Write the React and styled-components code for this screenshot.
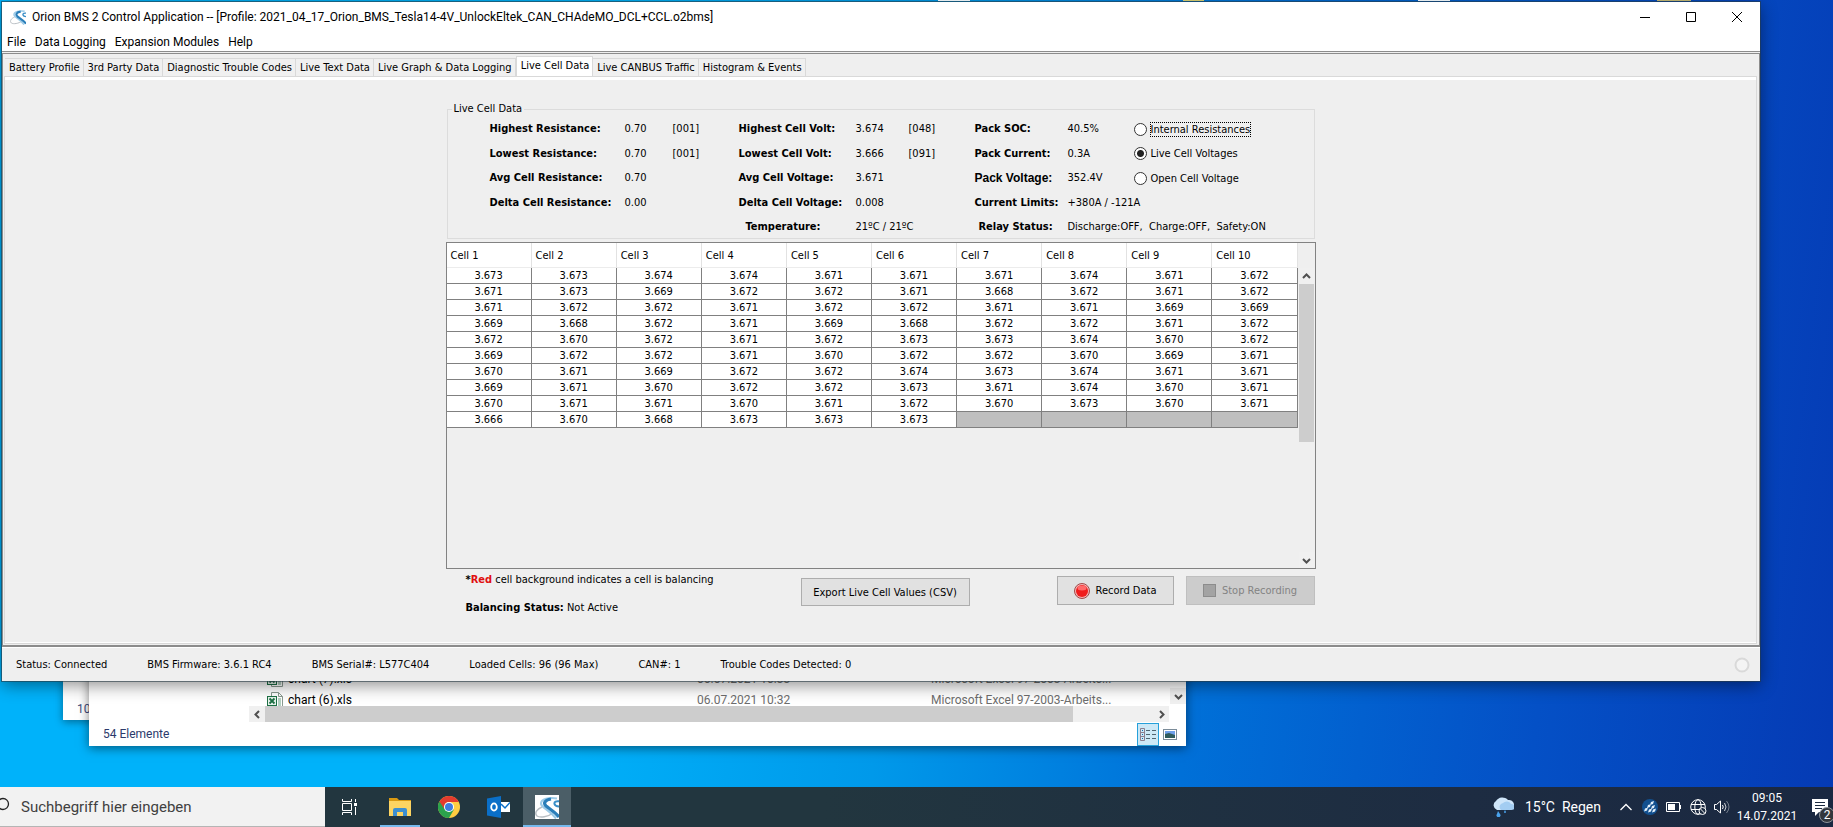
import { useState } from "react";
import styled, { createGlobalStyle } from "styled-components";

const tabs = [
  "Battery Profile",
  "3rd Party Data",
  "Diagnostic Trouble Codes",
  "Live Text Data",
  "Live Graph & Data Logging",
  "Live Cell Data",
  "Live CANBUS Traffic",
  "Histogram & Events",
];

const cells = [
  ["3.673", "3.673", "3.674", "3.674", "3.671", "3.671", "3.671", "3.674", "3.671", "3.672"],
  ["3.671", "3.673", "3.669", "3.672", "3.672", "3.671", "3.668", "3.672", "3.671", "3.672"],
  ["3.671", "3.672", "3.672", "3.671", "3.672", "3.672", "3.671", "3.671", "3.669", "3.669"],
  ["3.669", "3.668", "3.672", "3.671", "3.669", "3.668", "3.672", "3.672", "3.671", "3.672"],
  ["3.672", "3.670", "3.672", "3.671", "3.672", "3.673", "3.673", "3.674", "3.670", "3.672"],
  ["3.669", "3.672", "3.672", "3.671", "3.670", "3.672", "3.672", "3.670", "3.669", "3.671"],
  ["3.670", "3.671", "3.669", "3.672", "3.672", "3.674", "3.673", "3.674", "3.671", "3.671"],
  ["3.669", "3.671", "3.670", "3.672", "3.672", "3.673", "3.671", "3.674", "3.670", "3.671"],
  ["3.670", "3.671", "3.671", "3.670", "3.671", "3.672", "3.670", "3.673", "3.670", "3.671"],
  ["3.666", "3.670", "3.668", "3.673", "3.673", "3.673", "", "", "", ""],
];

const statusItems = [
  "Status: Connected",
  "BMS Firmware: 3.6.1 RC4",
  "BMS Serial#: L577C404",
  "Loaded Cells: 96 (96 Max)",
  "CAN#: 1",
  "Trouble Codes Detected: 0",
];

const viewModes = ["Internal Resistances", "Live Cell Voltages", "Open Cell Voltage"];

function OrionLogo({ size }) {
  return (
    <svg width={size} height={size} viewBox="0 0 24 24" fill="none" aria-hidden="true">
      <rect width="24" height="24" fill="#fff" />
      <path d="M7 12C2 14-1 18 2 21c3 2 11 1 16-3" stroke="#b9bfc4" strokeWidth="1.500" />
      <path d="M22 3.500C14 2 6 4 6 8.500c0 4 8 6 15 15" stroke="#9ccbe8" strokeWidth="2.200" />
      <path d="M16 4C10 5 8 8 11 11c3 2.500 8 5 13 11" stroke="#2a7fba" strokeWidth="3.200" />
      <path d="M25 6.500c-4-1-6 .5-5.500 2.500s3 2.500 5.500 2.500" stroke="#3a8fc8" strokeWidth="2" />
    </svg>
  );
}

function Chevron({ dir }) {
  const turn = { up: 0, right: 90, down: 180, left: 270 }[dir];
  return (
    <svg width="9" height="9" viewBox="0 0 9 9" fill="none" aria-hidden="true">
      <path d="M1 6l3.500-3.500L8 6" stroke="#505050" strokeWidth="2" transform={`rotate(${turn} 4.5 4.5)`} />
    </svg>
  );
}

function ExcelIcon() {
  return (
    <svg width="16" height="16" viewBox="0 0 16 16" fill="none" aria-hidden="true">
      <path d="M4.500 .5h7l4 4v11h-11z" fill="#fff" stroke="#8a9a90" />
      <path d="M11.500 .5v4h4" stroke="#8a9a90" />
      <path d="M11 7h3M11 9h3M11 11h3M11 13h3" stroke="#6aa585" />
      <rect x=".5" y="4.500" width="9" height="9" fill="#e8f3ec" stroke="#1d7044" />
      <path d="M2.500 6.500l5 5M7.500 6.500l-5 5" stroke="#1d7044" strokeWidth="1.800" />
    </svg>
  );
}

function TitleBar() {
  return (
    <TitleRow>
      <OrionLogo size={16} />
      <TitleText>
        Orion BMS 2 Control Application -- [Profile: 2021_04_17_Orion_BMS_Tesla14-4V_UnlockEltek_CAN_CHAdeMO_DCL+CCL.o2bms]
      </TitleText>
      <CaptionButton aria-label="Minimize">
        <svg width="10" height="10" viewBox="0 0 10 10"><path d="M0 5.500h10" stroke="#000" /></svg>
      </CaptionButton>
      <CaptionButton aria-label="Maximize">
        <svg width="10" height="10" viewBox="0 0 10 10"><path d="M.5 .5h9v9h-9z" fill="none" stroke="#000" /></svg>
      </CaptionButton>
      <CaptionButton aria-label="Close">
        <svg width="10" height="10" viewBox="0 0 10 10"><path d="M0 0l10 10M10 0L0 10" stroke="#000" /></svg>
      </CaptionButton>
    </TitleRow>
  );
}

function Readings({ mode, setMode }) {
  const radio = (name) => (
    <RadioLabel>
      <input type="radio" name="view" checked={mode === name} onChange={() => setMode(name)} />
      <RadioText $focused={name === viewModes[0]}>{name}</RadioText>
    </RadioLabel>
  );

  return (
    <Group>
      <legend>Live Cell Data</legend>
      <ReadingGrid>
        <b>Highest Resistance:</b>
        <span>0.70</span>
        <span>[001]</span>
        <b>Highest Cell Volt:</b>
        <span>3.674</span>
        <span>[048]</span>
        <b>Pack SOC:</b>
        <span>40.5%</span>
        {radio(viewModes[0])}

        <b>Lowest Resistance:</b>
        <span>0.70</span>
        <span>[001]</span>
        <b>Lowest Cell Volt:</b>
        <span>3.666</span>
        <span>[091]</span>
        <b>Pack Current:</b>
        <span>0.3A</span>
        {radio(viewModes[1])}

        <b>Avg Cell Resistance:</b>
        <Value $span={2}>0.70</Value>
        <b>Avg Cell Voltage:</b>
        <Value $span={2}>3.671</Value>
        <ArialLabel>Pack Voltage:</ArialLabel>
        <span>352.4V</span>
        {radio(viewModes[2])}

        <b>Delta Cell Resistance:</b>
        <Value $span={2}>0.00</Value>
        <b>Delta Cell Voltage:</b>
        <Value $span={2}>0.008</Value>
        <b>Current Limits:</b>
        <Value $span={2}>+380A / -121A</Value>

        <LastLabel $start={4} $indent="7px">Temperature:</LastLabel>
        <Value $span={2}>21ºC / 21ºC</Value>
        <LastLabel $start={7} $indent="4px">Relay Status:</LastLabel>
        <Value $span={2}>Discharge:OFF,&nbsp; Charge:OFF,&nbsp; Safety:ON</Value>
      </ReadingGrid>
    </Group>
  );
}

function CellTable() {
  return (
    <TableFrame>
      <TableArea>
        <Table>
          <thead>
            <tr>
              {cells[0].map((_, i) => (
                <th key={i} scope="col">Cell {i + 1}</th>
              ))}
            </tr>
          </thead>
          <tbody>
            {cells.map((row, r) => (
              <tr key={r}>
                {row.map((volt, c) => (
                  <Cell key={c} $empty={!volt}>{volt}</Cell>
                ))}
              </tr>
            ))}
          </tbody>
        </Table>
      </TableArea>
      <ScrollColumn>
        <ScrollButton aria-label="Scroll up"><Chevron dir="up" /></ScrollButton>
        <ScrollTrack><ScrollThumb /></ScrollTrack>
        <ScrollButton aria-label="Scroll down"><Chevron dir="down" /></ScrollButton>
      </ScrollColumn>
    </TableFrame>
  );
}

function OrionWindow() {
  const [tab, setTab] = useState("Live Cell Data");
  const [mode, setMode] = useState("Live Cell Voltages");

  return (
    <MainWindow>
      <TitleBar />
      <MenuBar>
        <button>File</button>
        <button>Data Logging</button>
        <button>Expansion Modules</button>
        <button>Help</button>
      </MenuBar>
      <Body>
        <TabBar role="tablist">
          {tabs.map((name) => (
            <Tab key={name} role="tab" aria-selected={tab === name} $active={tab === name} onClick={() => setTab(name)}>
              {name}
            </Tab>
          ))}
        </TabBar>
        <Panel>
          <Content>
            <Readings mode={mode} setMode={setMode} />
            <CellTable />
            <Actions>
              <Notes>
                <p><b>*<em>Red</em></b> cell background indicates a cell is balancing</p>
                <p><b>Balancing Status:</b> Not Active</p>
              </Notes>
              <ExportButton>Export Live Cell Values (CSV)</ExportButton>
              <RecordButton>
                <svg width="16" height="16" viewBox="0 0 16 16" aria-hidden="true">
                  <circle cx="8" cy="8" r="7.500" fill="#f5b5b5" stroke="#a04848" />
                  <circle cx="8" cy="8" r="6" fill="#f01c1c" />
                  <ellipse cx="8" cy="5" rx="4.500" ry="2.500" fill="#ff6a6a" />
                </svg>
                Record Data
              </RecordButton>
              <StopButton disabled>
                <svg width="13" height="13" viewBox="0 0 13 13" aria-hidden="true">
                  <rect x=".5" y=".5" width="12" height="12" fill="#a3a3a3" stroke="#8c8c8c" />
                </svg>
                Stop Recording
              </StopButton>
            </Actions>
          </Content>
        </Panel>
      </Body>
      <StatusBar>
        {statusItems.map((item) => (
          <span key={item}>{item}</span>
        ))}
        <svg width="16" height="16" viewBox="0 0 16 16" aria-hidden="true">
          <circle cx="8" cy="8" r="6.500" fill="#f4f4f4" stroke="#d9d9d9" strokeWidth="2" />
        </svg>
      </StatusBar>
    </MainWindow>
  );
}

function ExplorerWindow() {
  return (
    <Explorer>
      <Files>
        <FileRow>
          <ExcelIcon />
          <span>chart (7).xls</span>
          <small>06.07.2021 10:33</small>
          <small>Microsoft Excel 97-2003-Arbeits...</small>
        </FileRow>
        <FileRow>
          <ExcelIcon />
          <span>chart (6).xls</span>
          <small>06.07.2021 10:32</small>
          <small>Microsoft Excel 97-2003-Arbeits...</small>
        </FileRow>
        <FileScrollDown aria-label="Scroll files down"><Chevron dir="down" /></FileScrollDown>
      </Files>
      <HorizontalScroll>
        <ScrollButton aria-label="Scroll left"><Chevron dir="left" /></ScrollButton>
        <HorizontalTrack><HorizontalThumb /></HorizontalTrack>
        <ScrollButton aria-label="Scroll right"><Chevron dir="right" /></ScrollButton>
      </HorizontalScroll>
      <ExplorerStatus>
        <span>54 Elemente</span>
        <ViewButton $active aria-label="Details">
          <svg width="16" height="13" viewBox="0 0 16 13" fill="none">
            <path d="M.5 .5h4v12h-4zM.5 4.500h4M.5 8.500h4" stroke="#8b7f8f" />
            <path d="M6 2.500h4M12 2.500h4M6 6.500h4M12 6.500h4M6 10.500h4M12 10.500h4" stroke="#4f6470" />
            <path d="M2 2.500h1M2 6.500h1M2 10.500h1" stroke="#1c66a8" />
          </svg>
        </ViewButton>
        <ViewButton aria-label="Large icons">
          <svg width="14" height="11" viewBox="0 0 14 11">
            <rect x=".5" y=".5" width="13" height="10" fill="#fff" stroke="#7b8c99" />
            <rect x="2" y="2" width="10" height="4" fill="#6fa0ea" />
            <path d="M2 5l4-1 6 2v3H2z" fill="#2f5b5c" />
          </svg>
        </ViewButton>
      </ExplorerStatus>
    </Explorer>
  );
}

function Taskbar() {
  return (
    <Bar>
      <Search>
        <svg width="10" height="14" viewBox="0 0 10 14" fill="none" aria-hidden="true">
          <circle cx="3" cy="7" r="5.500" stroke="#222" strokeWidth="1.300" />
        </svg>
        <input type="text" aria-label="Suche" placeholder="Suchbegriff hier eingeben" />
      </Search>
      <TaskButton aria-label="Taskansicht">
        <svg width="17" height="16" viewBox="0 0 17 16" fill="none" stroke="#fff">
          <path d="M1.500 4.500h9v7h-9zM1.500 0v2.500h9V0M1.500 16v-2.500h9V16M14.500 0v3M14.500 8v8" />
          <path d="M13 5.500h3" strokeWidth="3" />
        </svg>
      </TaskButton>
      <Apps>
        <TaskButton aria-label="Explorer">
          <svg width="22" height="18" viewBox="0 0 22 18">
            <path d="M0 0h8l2 2h12v4H0z" fill="#d99a12" />
            <path d="M0 3h22v15H0z" fill="#fcd462" />
            <path d="M4 18v-6q0-2 2-2h10q2 0 2 2v6h-4v-4H8v4z" fill="#3c8fd0" />
          </svg>
          <Running $inset="4px" />
        </TaskButton>
        <TaskButton aria-label="Chrome">
          <svg width="22" height="22" viewBox="0 0 22 22">
            <circle cx="11" cy="11" r="11" fill="#ffcd41" />
            <path d="M11 11L1.470 5.500A11 11 0 0 0 11 22l4.800-8.200z" fill="#2ba24c" />
            <path d="M11 6h9.800A11 11 0 0 0 1.470 5.500L6.700 13.500A5 5 0 0 1 11 6z" fill="#e33b2e" />
            <circle cx="11" cy="11" r="5" fill="#fff" />
            <circle cx="11" cy="11" r="4" fill="#3f7de0" />
          </svg>
        </TaskButton>
        <TaskButton aria-label="Outlook">
          <svg width="23" height="22" viewBox="0 0 23 22">
            <path d="M0 2.500L14 0v22L0 19.500z" fill="#0a6fc8" />
            <rect x="14" y="6" width="9" height="10" fill="#fff" />
            <path d="M14 8l4 4 5-5.500" fill="none" stroke="#0a6fc8" strokeWidth="1.500" />
            <ellipse cx="7" cy="11" rx="2.800" ry="3.600" fill="none" stroke="#fff" strokeWidth="1.800" />
          </svg>
        </TaskButton>
        <TaskButton $active aria-label="Orion BMS 2">
          <OrionLogo size={24} />
          <Running $inset="0" />
        </TaskButton>
      </Apps>
      <Tray>
        <Weather>
          <svg width="22" height="20" viewBox="0 0 22 20" aria-hidden="true">
            <path d="M5 13a5 5 0 0 1-1-9 7 6 0 0 1 12-1 5 5 0 0 1 2 10z" fill="#cfe6fa" />
            <path d="M9 13a4 4 0 0 1 2-7 5 5 0 0 1 8 1 4 3 0 0 1 0 6z" fill="#a3cdf2" />
            <path d="M6 14l2 3a2 2 0 1 1-3 0zM13 13l1 2a1 1 0 1 1-2 0z" fill="#4aa3ee" />
          </svg>
          15°C&nbsp; Regen
        </Weather>
        <TrayButton aria-label="Ausgeblendete Symbole">
          <svg width="12" height="8" viewBox="0 0 12 8" fill="none"><path d="M.5 7L6 1.500 11.500 7" stroke="#fff" strokeWidth="1.300" /></svg>
        </TrayButton>
        <TrayButton aria-label="Synchronisierung">
          <svg width="16" height="16" viewBox="0 0 16 16">
            <circle cx="8" cy="8" r="8" fill="#12508f" />
            <path d="M9 3l3-1-1 3-3 1zM6 6l3-1-1 3-3 1zM10 7l3-1-1 3-3 1zM3 9.500l3-1-1 3-3 1zM7 10.500l3-1-1 3-3 1zM11 10.500l3-1-1 3-3 1z" fill="#e3f0fb" />
          </svg>
        </TrayButton>
        <TrayButton aria-label="Akku">
          <svg width="16" height="10" viewBox="0 0 16 10" fill="none">
            <path d="M.5 .5h13v9H.5z" stroke="#fff" />
            <path d="M2 2h7v6H2zM14 3h1v4h-1z" fill="#fff" />
          </svg>
        </TrayButton>
        <TrayButton aria-label="Netzwerk">
          <svg width="17" height="16" viewBox="0 0 17 16" fill="none" stroke="#fff">
            <circle cx="8" cy="8" r="7.300" />
            <ellipse cx="8" cy="8" rx="3.200" ry="7.300" />
            <path d="M1 5.500h14M1 10.500h14" />
            <circle cx="12.500" cy="12" r="3.500" fill="#1b2a40" />
            <path d="M10 9.500l5 5" />
          </svg>
        </TrayButton>
        <TrayButton aria-label="Lautsprecher">
          <svg width="16" height="14" viewBox="0 0 16 14" fill="none" stroke="#fff">
            <path d="M.5 4.500h2l4-3.500v12l-4-3.500h-2z" />
            <path d="M8.500 5q1.500 2 0 4" />
            <path d="M10.500 3q3 4 0 8" opacity=".8" />
            <path d="M12.500 1q5 6 0 12" opacity=".4" />
          </svg>
        </TrayButton>
        <Clock>
          <time>09:05</time>
          <time>14.07.2021</time>
        </Clock>
        <NoticeButton aria-label="Benachrichtigungen">
          <svg width="16" height="17" viewBox="0 0 16 17">
            <path d="M0 0h16v13H7l-4 4v-4H0z" fill="#fff" />
            <path d="M3 3.500h10M3 6.500h10M3 9.500h7" stroke="#1b2a40" />
          </svg>
          <Badge>2</Badge>
        </NoticeButton>
      </Tray>
    </Bar>
  );
}

function App() {
  return (
    <>
      <GlobalStyle />
      <Screen>
        <Desktop>
          <DesktopIcon $x="938px" $width="32px" $color="#e4ebee" />
          <DesktopIcon $x="1183px" $width="21px" $color="#c9c06a" />
          <DesktopIcon $x="1418px" $width="32px" $color="#e4ebee" />
          <DesktopIcon $x="1657px" $width="34px" $color="#b5ab6c" />
          <BackWindow>10</BackWindow>
          <ExplorerWindow />
          <OrionWindow />
        </Desktop>
        <Taskbar />
      </Screen>
    </>
  );
}

export default App;

const GlobalStyle = createGlobalStyle`
  * {
    box-sizing: border-box;
  }
  body {
    margin: 0;
    overflow: hidden;
    font-family: "DejaVu Sans Condensed", "DejaVu Sans", sans-serif;
    font-size: 11px;
    color: #000;
  }
  button, input {
    font: inherit;
    color: inherit;
    border: none;
    background: none;
    padding: 0;
    margin: 0;
  }
  svg {
    display: block;
    flex: none;
  }
`;

const systemFont = `Roboto, "Open Sans", sans-serif`;

const Screen = styled.div`
  display: flex;
  flex-direction: column;
  height: 100vh;
  background: linear-gradient(97deg, #00b2fa 0%, #00b2fa 33%, #0099ea 50%, #0070d8 66%, #0450c6 84%, #053ab4 100%);
`;

const Desktop = styled.div`
  position: relative;
  flex: 1;
  overflow: hidden;
`;

const DesktopIcon = styled.div`
  position: absolute;
  top: 0;
  left: ${(p) => p.$x};
  width: ${(p) => p.$width};
  height: 1px;
  background: ${(p) => p.$color};
  z-index: 1;
`;

/* windows float freely on the desktop */
const MainWindow = styled.main`
  position: absolute;
  inset: 2px 73px 106px 2px;
  display: flex;
  flex-direction: column;
  background: #efefef;
  box-shadow: 0 0 0 1px rgba(40, 60, 70, 0.6), 0 4px 16px rgba(0, 0, 0, 0.45);
`;

const BackWindow = styled.div`
  position: absolute;
  left: 63px;
  bottom: 67px;
  width: 400px;
  height: 300px;
  display: flex;
  align-items: flex-end;
  padding: 0 14px 3px;
  background: #fff;
  box-shadow: 0 2px 8px rgba(0, 0, 0, 0.4);
  font: 12px/16px ${systemFont};
  color: #3d4c7c;
`;

const Explorer = styled.section`
  position: absolute;
  left: 89px;
  right: 647px;
  bottom: 41px;
  display: flex;
  flex-direction: column;
  background: #fff;
  box-shadow: 0 2px 10px rgba(0, 0, 0, 0.5);
  font: 12px/16px ${systemFont};
`;

const TitleRow = styled.header`
  display: flex;
  align-items: center;
  height: 29px;
  padding-left: 8px;
  background: #fff;
`;

const TitleText = styled.h1`
  flex: 1;
  margin: 0 0 0 6px;
  font: 12px/16px ${systemFont};
  white-space: nowrap;
`;

const CaptionButton = styled.button`
  display: flex;
  justify-content: center;
  align-items: center;
  width: 46px;
  height: 29px;
`;

const MenuBar = styled.nav`
  display: flex;
  gap: 9px;
  height: 21px;
  padding: 2px 5px 0;
  background: #fff;
  border-bottom: 1px solid #8c8c8c;
  font: 12px/18px ${systemFont};
`;

const Body = styled.div`
  flex: 1;
  display: flex;
  flex-direction: column;
  margin-top: 1px;
  padding: 2px 2px 1px 1px;
  border: 1px solid #8c8c8c;
  border-bottom-width: 2px;
`;

const TabBar = styled.div`
  display: flex;
  align-items: flex-end;
  height: 20px;
  padding-left: 1px;
`;

const Tab = styled.button`
  height: ${(p) => (p.$active ? "20px" : "18px")};
  padding: ${(p) => (p.$active ? "0 3px 3px 4px" : "0 3px 0 4px")};
  background: ${(p) => (p.$active ? "#fff" : "#f0f0f0")};
  border: 1px solid #d9d9d9;
  border-left-width: ${(p) => (p.$active ? "1px" : "0")};
  border-bottom: none;
  white-space: nowrap;
`;

const Panel = styled.div`
  flex: 1;
  border: 1px solid #d9d9d9;
  box-shadow: inset 0 3px #fff, inset 0 -1px #fff;
  padding-top: 25px;
`;

const Content = styled.div`
  width: 870px;
  margin: 0 auto;
`;

const Group = styled.fieldset`
  height: 137px;
  margin: 0 1px 3px;
  padding: 5px 0 0 42px;
  border: 1px solid #dcdcdc;

  legend {
    margin-left: -38px;
    padding: 0 2px;
    line-height: 14px;
  }
`;

const ReadingGrid = styled.div`
  display: grid;
  grid-template-columns: 135px 48px 66px 117px 53px 66px 93px 66px 1fr;
  align-content: space-between;
  height: 114px;
  line-height: 16px;
  white-space: nowrap;
`;

const Value = styled.span`
  grid-column: span ${(p) => p.$span};
`;

const ArialLabel = styled.b`
  font-family: "Liberation Sans", Arial, sans-serif;
  font-size: 12px;
`;

const LastLabel = styled.b`
  grid-column-start: ${(p) => p.$start};
  padding-left: ${(p) => p.$indent};
`;

const RadioLabel = styled.label`
  display: flex;
  align-items: center;
  gap: 4px;

  input {
    appearance: none;
    width: 13px;
    height: 13px;
    border: 1px solid #333;
    border-radius: 50%;
    background: #fff;
  }
  input:checked {
    background: radial-gradient(circle, #222 0 3px, #fff 4px);
  }
`;

const RadioText = styled.span`
  line-height: 13px;
  outline: ${(p) => (p.$focused ? "1px dotted #000" : "none")};
`;

const TableFrame = styled.div`
  display: flex;
  height: 327px;
  border: 1px solid #828282;
`;

const TableArea = styled.div`
  flex: 1;
`;

const Table = styled.table`
  width: 100%;
  table-layout: fixed;
  border-collapse: separate;
  border-spacing: 0;

  th {
    height: 25px;
    padding: 0 4px;
    background: #fff;
    border-right: 1px solid #e2e2e2;
    border-bottom: 1px solid #ececec;
    font-weight: normal;
    text-align: left;
  }
`;

const Cell = styled.td`
  height: 16px;
  padding: 0;
  line-height: 15px;
  text-align: center;
  background: ${(p) => (p.$empty ? "#bfbfbf" : "#fff")};
  border-right: 1px solid #808080;
  border-bottom: 1px solid #808080;
`;

const ScrollColumn = styled.div`
  display: flex;
  flex-direction: column;
  width: 17px;
  padding: 25px 1px 0;
`;

const ScrollButton = styled.button`
  display: flex;
  justify-content: center;
  align-items: center;
  width: 16px;
  height: 16px;
  background: #f0f0f0;
`;

const ScrollTrack = styled.div`
  flex: 1;
`;

const ScrollThumb = styled.div`
  height: 59%;
  background: #cdcdcd;
`;

const Actions = styled.div`
  display: flex;
  align-items: flex-start;
  padding: 3px 1px 0 20px;
`;

const Notes = styled.div`
  flex: 1;
  line-height: 16px;

  p {
    margin: 0 0 12px;
  }
  em {
    color: #e01010;
    font-style: normal;
  }
`;

const FormButton = styled.button`
  display: flex;
  justify-content: center;
  align-items: center;
  gap: 6px;
  height: 29px;
  margin-top: 4px;
  background: #e1e1e1;
  border: 1px solid #adadad;
`;

const ExportButton = styled(FormButton)`
  width: 169px;
  height: 28px;
  margin-top: 6px;
`;

const RecordButton = styled(FormButton)`
  width: 117px;
  margin-left: 87px;
`;

const StopButton = styled(FormButton)`
  width: 129px;
  margin-left: 12px;
  background: #cccccc;
  border-color: #bfbfbf;
  color: #838383;
`;

const StatusBar = styled.footer`
  display: flex;
  align-items: center;
  gap: 40px;
  height: 34px;
  padding: 0 10px 0 14px;
  border-top: 1px solid #fff;
  white-space: nowrap;

  svg {
    margin-left: auto;
  }
`;

const Files = styled.div`
  position: relative;
  height: 38px;
  padding-left: 178px;
  overflow: hidden;
`;

const FileRow = styled.div`
  display: grid;
  grid-template-columns: 16px 404px 229px 1fr;
  column-gap: 5px;
  align-items: center;
  height: 21px;

  small {
    font-size: 12px;
    color: #6d6d6d;
  }
`;

const FileScrollDown = styled.button`
  position: absolute;
  right: 0;
  bottom: 2px;
  display: flex;
  justify-content: center;
  align-items: center;
  width: 16px;
  height: 16px;
  background: #f0f0f0;
`;

const HorizontalScroll = styled.div`
  display: flex;
  height: 16px;
  margin: 0 17px 0 160px;
  background: #f0f0f0;
`;

const HorizontalTrack = styled.div`
  flex: 1;
`;

const HorizontalThumb = styled.div`
  width: 91%;
  height: 16px;
  background: #cdcdcd;
`;

const ExplorerStatus = styled.div`
  display: flex;
  align-items: center;
  height: 24px;
  padding: 0 5px 0 14px;
  color: #2b3a6b;

  span {
    flex: 1;
  }
`;

const ViewButton = styled.button`
  display: flex;
  justify-content: center;
  align-items: center;
  width: 22px;
  height: 23px;
  background: ${(p) => (p.$active ? "#cce8f6" : "transparent")};
  border: 1px solid ${(p) => (p.$active ? "#26a0da" : "transparent")};
`;

const Bar = styled.footer`
  display: flex;
  height: 40px;
  background: linear-gradient(90deg, #22363f 0%, #22363f 45%, #1d2c42 80%, #1a2841 100%);
  color: #fff;
  font-family: ${systemFont};
`;

const Search = styled.label`
  display: flex;
  align-items: center;
  gap: 11px;
  width: 325px;
  background: #f2f2f2;
  border-bottom: 1px solid #b5b5b5;

  svg {
    margin-top: -5px;
  }
  input {
    flex: 1;
    min-width: 0;
    outline: none;
    font-size: 15px;
    color: #333;
  }
  input::placeholder {
    color: #404040;
    opacity: 1;
  }
`;

const TaskButton = styled.button`
  position: relative;
  display: flex;
  justify-content: center;
  align-items: center;
  width: 48px;
  height: 40px;
  background: ${(p) => (p.$active ? "#4b5e67" : "transparent")};
`;

const Running = styled.span`
  position: absolute;
  left: ${(p) => p.$inset};
  right: ${(p) => p.$inset};
  bottom: 0;
  height: 2px;
  background: #76b9ed;
`;

const Apps = styled.div`
  display: flex;
  gap: 1px;
  margin-left: 3px;
`;

const Tray = styled.div`
  flex: 1;
  display: flex;
  justify-content: flex-end;
  align-items: center;
  padding-right: 5px;
  white-space: nowrap;
`;

const Weather = styled.button`
  display: flex;
  align-items: center;
  gap: 11px;
  margin-right: 13px;
  font-size: 14px;
`;

const TrayButton = styled.button`
  display: flex;
  justify-content: center;
  align-items: center;
  width: 24px;
  height: 40px;
`;

const Clock = styled.div`
  display: flex;
  flex-direction: column;
  align-items: center;
  width: 72px;
  margin-left: -3px;
  font-size: 12px;
  line-height: 18px;
`;

const NoticeButton = styled.button`
  position: relative;
  margin-left: 9px;
`;

const Badge = styled.span`
  position: absolute;
  left: 7px;
  top: 8px;
  width: 16px;
  height: 16px;
  border: 1px solid #8f959c;
  border-radius: 50%;
  background: #33373d;
  font-size: 12px;
  line-height: 14px;
`;
